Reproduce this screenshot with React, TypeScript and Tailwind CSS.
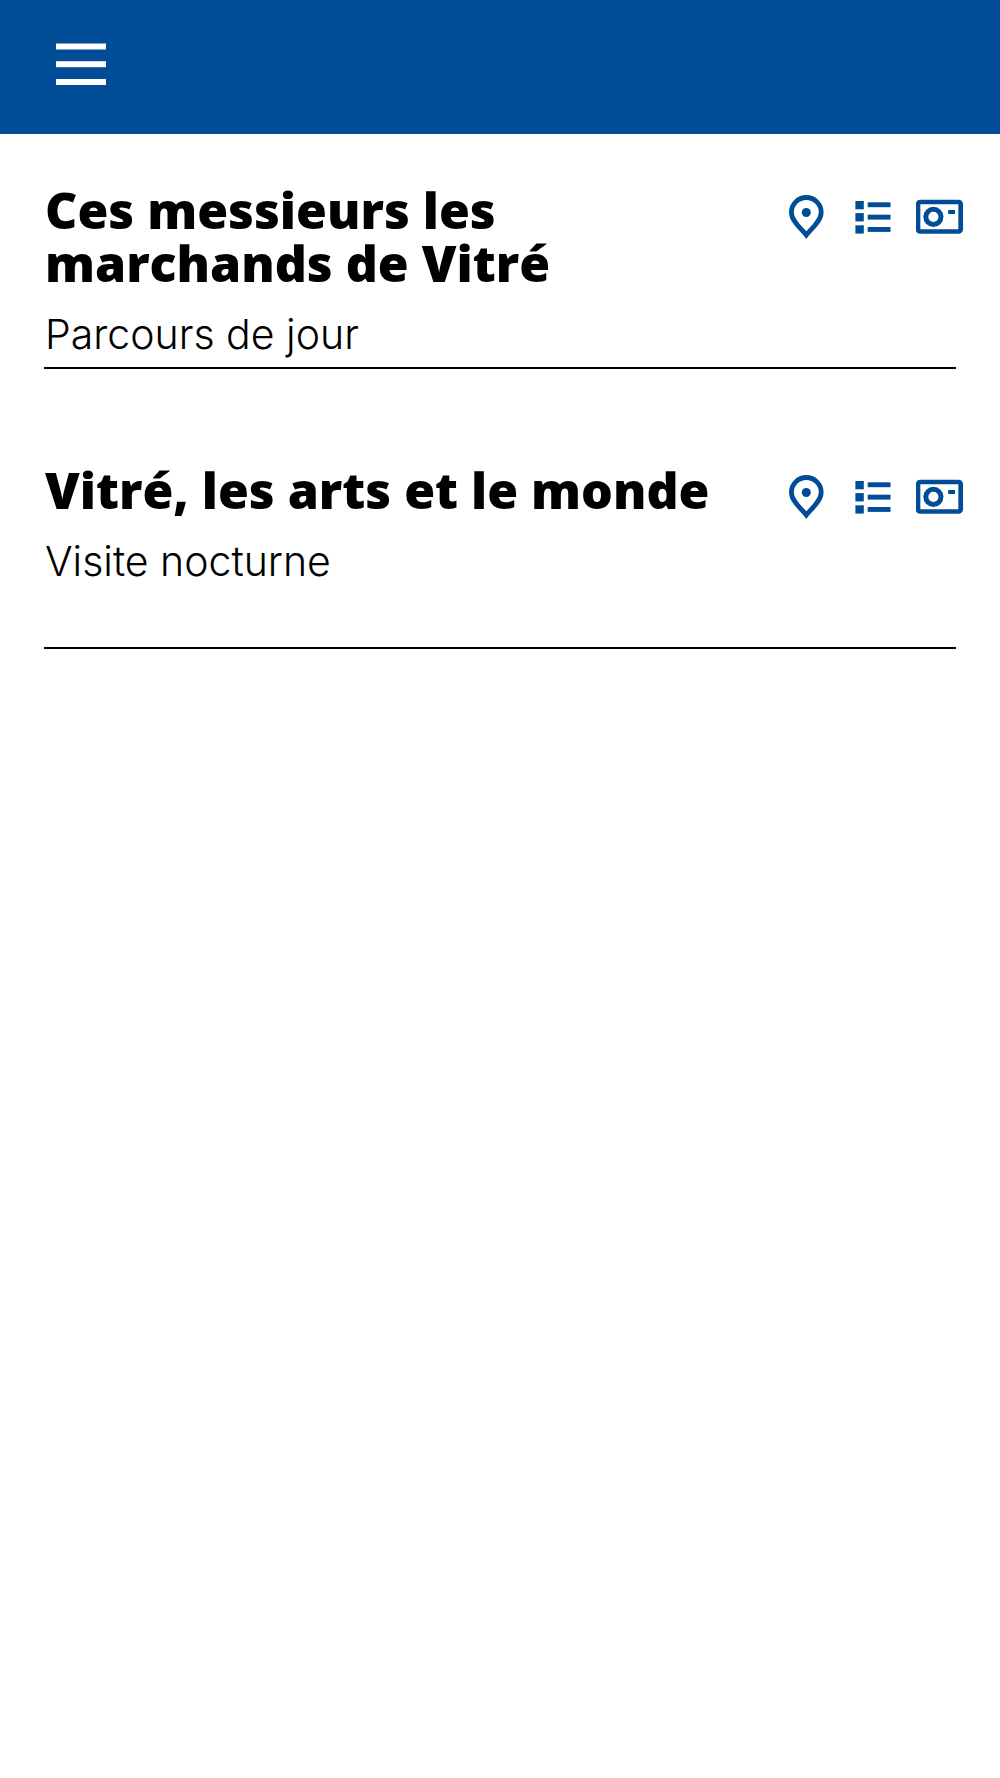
import type { ReactNode } from 'react';

type Tour = {
  id: string;
  title: string;
  subtitle: string;
};

const tours: Tour[] = [
  { id: 'marchands', title: 'Ces messieurs les marchands de Vitré', subtitle: 'Parcours de jour' },
  { id: 'arts', title: 'Vitré, les arts et le monde', subtitle: 'Visite nocturne' },
];

const MenuIcon = () => (
  <svg viewBox="0 0 50 42" className="w-[50px] h-[42px]" fill="currentColor" aria-hidden="true">
    <rect y="0.5" width="50" height="6" />
    <rect y="18.2" width="50" height="6" />
    <rect y="36" width="50" height="6" />
  </svg>
);

const PinIcon = () => (
  <svg viewBox="0 0 48 48" className="size-12" fill="none" aria-hidden="true">
    <path
      d="M24.3 42C20 36.5 9.4 28 9.4 19.4a14.9 14.9 0 0 1 29.8 0C39.2 28 28.6 36.5 24.3 42Z"
      stroke="currentColor"
      strokeWidth="4.8"
    />
    <circle cx="24.3" cy="19.5" r="4.5" fill="currentColor" />
  </svg>
);

const ListIcon = () => (
  <svg viewBox="0 0 48 48" className="size-12" fill="currentColor" aria-hidden="true">
    <rect x="6.4" y="8" width="8.4" height="8.3" />
    <rect x="6.4" y="20.1" width="8.4" height="8.3" />
    <rect x="6.4" y="32.3" width="8.4" height="8.3" />
    <rect x="18.7" y="9.3" width="22.8" height="4.9" />
    <rect x="18.7" y="21.7" width="22.8" height="4.9" />
    <rect x="18.7" y="34" width="22.8" height="4.9" />
  </svg>
);

const CameraIcon = () => (
  <svg viewBox="0 0 48 48" className="size-12" fill="none" stroke="currentColor" aria-hidden="true">
    <rect x="2" y="9" width="42.7" height="29.5" rx="2.2" strokeWidth="4.7" />
    <circle cx="17.4" cy="23.8" r="7.6" strokeWidth="5" />
    <rect x="32.2" y="17" width="6.8" height="4" fill="currentColor" stroke="none" />
  </svg>
);

const IconLink = (props: { href: string; label: string; children: ReactNode }) => (
  <a href={props.href} aria-label={props.label} className="block text-[#004c97]">
    {props.children}
  </a>
);

const TourItem = ({ tour }: { tour: Tour }) => (
  <li className="flex justify-between items-start min-h-[185px] border-b-2 border-black">
    <div className="flex-1 max-w-[680px] pl-px">
      <h2 className="font-extrabold text-[50px] leading-[53px] text-balance">{tour.title}</h2>
      <p className="mt-5 font-['Inter',sans-serif] font-light text-[41px] leading-[48px]">
        {tour.subtitle}
      </p>
    </div>
    <nav className="flex gap-[19px] mt-[9px] -mr-2" aria-label={tour.title}>
      <IconLink href={`#${tour.id}-carte`} label="Carte">
        <PinIcon />
      </IconLink>
      <IconLink href={`#${tour.id}-liste`} label="Liste">
        <ListIcon />
      </IconLink>
      <IconLink href={`#${tour.id}-photos`} label="Photos">
        <CameraIcon />
      </IconLink>
    </nav>
  </li>
);

export default function App() {
  return (
    <div className="min-h-screen bg-white text-black font-['Open_Sans',sans-serif]">
      <header className="flex px-14 pt-[43px] pb-[49px] bg-[#004c97]">
        <button type="button" aria-label="Menu" className="text-white">
          <MenuIcon />
        </button>
      </header>
      <main className="px-11 pt-[50px]">
        <ul className="flex flex-col gap-[95px]">
          {tours.map((tour) => (
            <TourItem key={tour.id} tour={tour} />
          ))}
        </ul>
      </main>
    </div>
  );
}
